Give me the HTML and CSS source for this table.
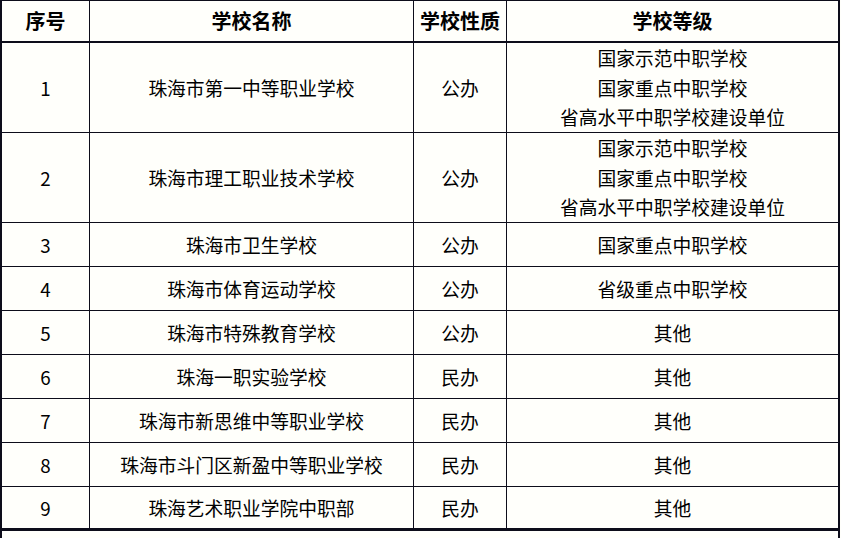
FILE: index.html
```html
<!DOCTYPE html>
<html lang="zh-CN">
<head>
<meta charset="utf-8">
<link rel="stylesheet" href="styles.css">
</head>
<body>
<table class="schools">
  <colgroup>
    <col class="c-no">
    <col class="c-name">
    <col class="c-type">
    <col class="c-level">
  </colgroup>
  <thead>
    <tr class="head">
      <th>序号</th>
      <th>学校名称</th>
      <th>学校性质</th>
      <th class="last">学校等级</th>
    </tr>
  </thead>
  <tbody>
    <tr class="tall">
      <td>1</td>
      <td>珠海市第一中等职业学校</td>
      <td>公办</td>
      <td class="last">国家示范中职学校<br>国家重点中职学校<br>省高水平中职学校建设单位</td>
    </tr>
    <tr class="tall">
      <td>2</td>
      <td>珠海市理工职业技术学校</td>
      <td>公办</td>
      <td class="last">国家示范中职学校<br>国家重点中职学校<br>省高水平中职学校建设单位</td>
    </tr>
    <tr>
      <td>3</td>
      <td>珠海市卫生学校</td>
      <td>公办</td>
      <td class="last">国家重点中职学校</td>
    </tr>
    <tr>
      <td>4</td>
      <td>珠海市体育运动学校</td>
      <td>公办</td>
      <td class="last">省级重点中职学校</td>
    </tr>
    <tr>
      <td>5</td>
      <td>珠海市特殊教育学校</td>
      <td>公办</td>
      <td class="last">其他</td>
    </tr>
    <tr>
      <td>6</td>
      <td>珠海一职实验学校</td>
      <td>民办</td>
      <td class="last">其他</td>
    </tr>
    <tr>
      <td>7</td>
      <td>珠海市新思维中等职业学校</td>
      <td>民办</td>
      <td class="last">其他</td>
    </tr>
    <tr>
      <td>8</td>
      <td>珠海市斗门区新盈中等职业学校</td>
      <td>民办</td>
      <td class="last">其他</td>
    </tr>
    <tr class="end">
      <td>9</td>
      <td>珠海艺术职业学院中职部</td>
      <td>民办</td>
      <td class="last">其他</td>
    </tr>
    <tr class="note">
      <td colspan="4" class="last"></td>
    </tr>
  </tbody>
</table>
</body>
</html>
```

FILE: styles.css
```css
html, body {
  margin: 0;
  padding: 0;
  background: #fffffb;
}

body {
  font-family: "Noto Sans CJK SC", "Noto Sans", sans-serif;
  color: #000;
  overflow: hidden;
}

.schools {
  border-collapse: separate;
  border-spacing: 0;
  table-layout: fixed;
  width: 840px;
  border-left: 2px solid #0d0d1a;
  border-top: 1px solid #0d0d1a;
}

.c-no { width: 88px; }
.c-name { width: 324px; }
.c-type { width: 93px; }
.c-level { width: 333px; }

.schools th,
.schools td {
  box-sizing: border-box;
  padding: 0;
  text-align: center;
  vertical-align: middle;
  border-right: 1px solid #0d0d1a;
  border-bottom: 1px solid #0d0d1a;
}

.schools .last {
  border-right: 2px solid #0d0d1a;
}

.head th {
  height: 42px;
  font-size: 20px;
  font-weight: 700;
  line-height: 28px;
  border-bottom: 2px solid #0d0d1a;
}

.schools td {
  height: 44px;
  font-size: 18.75px;
  line-height: 30px;
}

.tall td {
  height: 90px;
  line-height: 29.6px;
}

.end td {
  border-bottom: 3px solid #0d0d1a;
  height: 44px;
}

.note td {
  height: 40px;
  border-bottom: none;
}
```
